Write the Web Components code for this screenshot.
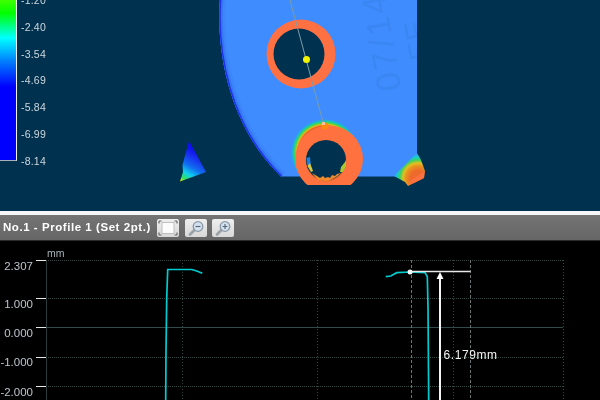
<!DOCTYPE html>
<html lang="en">
<head>
<meta charset="utf-8">
<title>Profile viewer</title>
<style>
html,body{margin:0;padding:0;background:#000;width:600px;height:400px;overflow:hidden}
</style>
</head>
<body>
<app-shell>
  <scene-view slot="scene">
    <color-legend></color-legend>
  </scene-view>
  <profile-toolbar slot="toolbar" label="No.1 - Profile 1 (Set 2pt.)">
    <tool-button kind="fit" title="Fit"></tool-button>
    <tool-button kind="out" title="Zoom out"></tool-button>
    <tool-button kind="in" title="Zoom in"></tool-button>
  </profile-toolbar>
  <profile-chart slot="chart"></profile-chart>
</app-shell>
<script>
class AppShell extends HTMLElement{
  constructor(){super();this.attachShadow({mode:'open'}).innerHTML=`
  <style>
    :host{display:grid;grid-template-rows:211px 4px 26px 1fr;width:600px;height:400px;overflow:hidden;background:#000;filter:blur(.3px)}
    .rule{background:#f4f6f7}
  </style>
  <slot name="scene"></slot><div class="rule"></div><slot name="toolbar"></slot><slot name="chart"></slot>`;}
}
class SceneView extends HTMLElement{
  constructor(){super();this.attachShadow({mode:'open'}).innerHTML=`
  <style>
    :host{display:block;position:relative;height:211px;overflow:hidden;background:#00324f}
    svg{display:block;width:600px;height:211px}
    text{font-family:"Liberation Sans",Arial,sans-serif}
  </style>
  <svg viewBox="0 0 600 211" xmlns="http://www.w3.org/2000/svg">
    <defs>
      <clipPath id="part"><path d="M220 -2 C216 50 228 125 281 176.500 L395 176.500 L417 155 L417 -2 Z"/></clipPath>
      <clipPath id="ringclip"><rect x="280" y="100" width="100" height="85"/></clipPath>
      <clipPath id="corner"><path d="M394 176 L417 153 L421 160 L425 171 L424 178 L418 181 L414 183 L408 186 L405 182 Z"/></clipPath>
      <radialGradient id="halo" cx=".5" cy=".5" r=".5">
        <stop offset=".80" stop-color="#e8622c"/>
        <stop offset=".84" stop-color="#ecb820"/>
        <stop offset=".88" stop-color="#58d838"/>
        <stop offset=".93" stop-color="#18c8b0"/>
        <stop offset=".98" stop-color="#2aa0f0"/>
        <stop offset="1" stop-color="#3f8cff" stop-opacity="0"/>
      </radialGradient>
      <radialGradient id="cornerg" gradientUnits="userSpaceOnUse" cx="418" cy="178" r="25">
        <stop offset=".3" stop-color="#ee6a2c"/>
        <stop offset=".48" stop-color="#e89020"/>
        <stop offset=".6" stop-color="#e0c020"/>
        <stop offset=".72" stop-color="#40d060"/>
        <stop offset=".84" stop-color="#10d0d0"/>
        <stop offset=".96" stop-color="#3a98f8"/>
        <stop offset="1" stop-color="#3f8cff"/>
      </radialGradient>
      <linearGradient id="tri" gradientUnits="userSpaceOnUse" x1="180" y1="181" x2="197" y2="152">
        <stop offset="0" stop-color="#e8f000"/>
        <stop offset=".13" stop-color="#30e060"/>
        <stop offset=".3" stop-color="#10d0f0"/>
        <stop offset=".52" stop-color="#1070f0"/>
        <stop offset=".8" stop-color="#1830f0"/>
        <stop offset="1" stop-color="#1010f0"/>
      </linearGradient>
    </defs>

    <path d="M189 141 L206 172 L180 181.500 L183 172 L182.500 165 Z" fill="url(#tri)"/>

    <path d="M220 -2 C216 50 228 125 281 176.500 L395 176.500 L417 155 L417 -2 Z" fill="#3f8cff"/>
    <g clip-path="url(#part)">
      <path d="M220 -2 C216 50 228 125 281 176.500" fill="none" stroke="#3c86fa" stroke-width="12"/>
      <path d="M220 -2 C216 50 228 125 281 176.500" fill="none" stroke="#3478f0" stroke-width="7"/>
      <path d="M220 -2 C216 50 228 125 281 176.500" fill="none" stroke="#1e30f0" stroke-width="3"/>
      <g fill="#3a86f2" font-size="34">
        <text transform="translate(401.500 89) rotate(-100)" letter-spacing="3">07/14</text>
        <text transform="translate(431 58) rotate(-100)" font-size="30">EE</text>
      </g>
      <ellipse cx="325" cy="153" rx="34" ry="34" fill="url(#halo)"/>
    </g>

    <ellipse cx="301" cy="54" rx="34.500" ry="34.500" fill="#ff7043"/>
    <ellipse cx="299" cy="54" rx="25.500" ry="25.500" fill="#00324f"/>
    <line x1="290" y1="0" x2="323" y2="122" stroke="#7c9ca8" stroke-width="1"/>
    <circle cx="306.500" cy="59.500" r="3.500" fill="#f4f400"/>

    <g clip-path="url(#ringclip)">
      <ellipse cx="329" cy="159" rx="34" ry="33.500" fill="#ff7240"/>
      <circle cx="326" cy="161" r="20.500" fill="#e2682e"/>
      <circle cx="326" cy="160" r="20" fill="#00324f"/>
      <path d="M306.500 158 L310 157 L311 168 L307.500 166 Z" fill="#1f80e0"/>
      <path d="M307.500 166 L310 163 L313 171 L311 172 Z" fill="#d8c840"/>
      <path d="M341 167 L345 162 L346 160 L346 166 L343 172 L340 172 Z" fill="#a8c830"/>
      <path d="M312 173 L317 176 L320 178 L323 176 L325 178 L328 177 L330 178 L332 175 L335 176 L337 174 L341 173 L336 177 L328 181 L318 180 Z" fill="#f08a2c"/>
    </g>
    <circle cx="325" cy="126" r="3.500" fill="#ff8a10"/>
    <rect x="322" y="122" width="3" height="3" fill="#f0c0a0"/>

    <rect x="390" y="150" width="40" height="40" fill="url(#cornerg)" clip-path="url(#corner)"/>
    <path d="M407.500 185 L412 180 L419 175 L424.500 172 L424 178 L418 181 L414 183 Z" fill="#ff7240"/>
  </svg>
  <slot></slot>`;}
}
class ColorLegend extends HTMLElement{
  constructor(){super();
    const vals=['-1.20','-2.40','-3.54','-4.69','-5.84','-6.99','-8.14'];
    this.attachShadow({mode:'open'}).innerHTML=`
  <style>
    :host{position:absolute;left:0;top:-6px;display:flex;gap:4px;height:173px;color:#ced6dc;font:10.500px/12px "Liberation Sans",Arial,sans-serif}
    .bar{width:16px;height:160px;margin-top:6px;border-right:1.500px solid #f0f4f8;border-bottom:1.500px solid #a8b0b8;
      background:linear-gradient(#40ff00 0,#00ff00 13px,#00ffff 38px,#0080ff 61px,#0000ff 87px,#0000ff 100%)}
    .labels{display:flex;flex-direction:column;justify-content:space-between;letter-spacing:.2px}
  </style>
  <div class="bar"></div>
  <div class="labels">${vals.map(v=>`<span>${v}</span>`).join('')}</div>`;}
}
class ProfileToolbar extends HTMLElement{
  constructor(){super();this.attachShadow({mode:'open'}).innerHTML=`
  <style>
    :host{display:flex;align-items:center;gap:5.500px;height:26px;padding:0 0 0 3px;box-sizing:border-box;background:linear-gradient(#747474,#666);color:#fff;border-bottom:1px solid #2a2a2a}
    .t{font:bold 11.500px/25px "Liberation Sans",Arial,sans-serif;letter-spacing:.55px;white-space:nowrap;width:148.500px;flex:none}
  </style>
  <span class="t"></span><slot></slot>`;
  this.shadowRoot.querySelector('.t').textContent=this.getAttribute('label');}
}
class ToolButton extends HTMLElement{
  constructor(){super();
    const k=this.getAttribute('kind');
    const lens=(sign)=>`
      <line x1="5" y1="15.500" x2="9.500" y2="11" stroke="#9aa2a8" stroke-width="2.600" stroke-linecap="round"/>
      <circle cx="13" cy="7.500" r="4.800" fill="#d4e2f0" stroke="#8a98a6" stroke-width="1.300"/>
      <path d="M10.500 7.500H15.500${sign?'M13 5V10':''}" stroke="#5a6a7c" stroke-width="1.200"/>`;
    const fit=`
      <rect x="5" y="3.500" width="12" height="11" fill="#fcfcfc" stroke="#b4b4b4" stroke-width=".8"/>
      <path d="M2 2h2.500M2 2v2.500M20 2h-2.500M20 2v2.500M2 16h2.500M2 16v-2.500M20 16h-2.500M20 16v-2.500" stroke="#666" stroke-width="1.200" fill="none"/>`;
    this.attachShadow({mode:'open'}).innerHTML=`
  <style>
    :host{display:block;flex:none;width:22px;height:18px;border-radius:2px;background:linear-gradient(#eee,#d8d8d8)}
    svg{display:block;width:22px;height:18px}
  </style>
  <svg viewBox="0 0 22 18" xmlns="http://www.w3.org/2000/svg">${k==='fit'?fit:lens(k==='in')}</svg>`;}
}
class ProfileChart extends HTMLElement{
  constructor(){super();
    const h=[260,298,357,386], v=[182,317,453];
    const labels=[['2.307',269.5],['1.000',308],['0.000',337],['-1.000',366],['-2.000',396]];
    this.attachShadow({mode:'open'}).innerHTML=`
  <style>
    :host{display:block;background:#000;height:159px;overflow:hidden}
    svg{display:block;width:600px;height:159px}
    text{font-family:"Liberation Sans",Arial,sans-serif}
  </style>
  <svg viewBox="0 241 600 159" xmlns="http://www.w3.org/2000/svg">
    ${h.map(y=>`<line x1="46" x2="563" y1="${y}.5" y2="${y}.5" stroke="#324846" stroke-dasharray="1 1"/>`).join('')}
    ${v.map(x=>`<line x1="${x}.5" x2="${x}.5" y1="260" y2="400" stroke="#2e4442" stroke-dasharray="1 2"/>`).join('')}
    <line x1="563.500" x2="563.500" y1="260" y2="400" stroke="#324846" stroke-dasharray="1 2"/>
    <line x1="46.500" x2="46.500" y1="260" y2="400" stroke="#2a3c3a"/>
    <line x1="36" x2="563" y1="327.500" y2="327.500" stroke="#2f4c4a"/>
    <line x1="411.500" x2="411.500" y1="260" y2="400" stroke="#6a7474" stroke-dasharray="3 2"/>
    <line x1="470.500" x2="470.500" y1="260" y2="400" stroke="#6a7474" stroke-dasharray="3 2"/>
    ${[260,298,327,357,386].map(y=>`<line x1="36" x2="46" y1="${y}.5" y2="${y}.5" stroke="#e4e8e8"/>`).join('')}
    <g fill="#bcc4cc" font-size="11.500" text-anchor="end">
      ${labels.map(([t,y])=>`<text x="33" y="${y}">${t}</text>`).join('')}
    </g>
    <text x="47" y="257" fill="#aab2ba" font-size="10.500">mm</text>
    <g fill="none" stroke="#00ccd0" stroke-width="1.700">
      <path d="M165.700 400 L166 352 L166.700 298 L167.700 269.500 L191.700 269.500 L196.700 271 L202.300 273.300"/>
      <path d="M385.700 276.700 L390.700 276 L396.700 272.700 L410 272 L425 272.700 L427.300 276.700 L428 306.700 L428.700 400"/>
    </g>
    <line x1="409" x2="470.500" y1="271.500" y2="271.500" stroke="#e8e8e8" stroke-width="1.400"/>
    <circle cx="410" cy="272" r="2.500" fill="#f4f4f4"/>
    <path d="M440 272 L443.500 279 L436.500 279 Z" fill="#fff"/>
    <rect x="439" y="279" width="2" height="121" fill="#f4f4f4"/>
    <text x="443.500" y="359" fill="#f4f4f4" font-size="12" textLength="53.500">6.179mm</text>
  </svg>`;}
}
customElements.define('app-shell',AppShell);
customElements.define('scene-view',SceneView);
customElements.define('color-legend',ColorLegend);
customElements.define('profile-toolbar',ProfileToolbar);
customElements.define('tool-button',ToolButton);
customElements.define('profile-chart',ProfileChart);
</script>
</body>
</html>
